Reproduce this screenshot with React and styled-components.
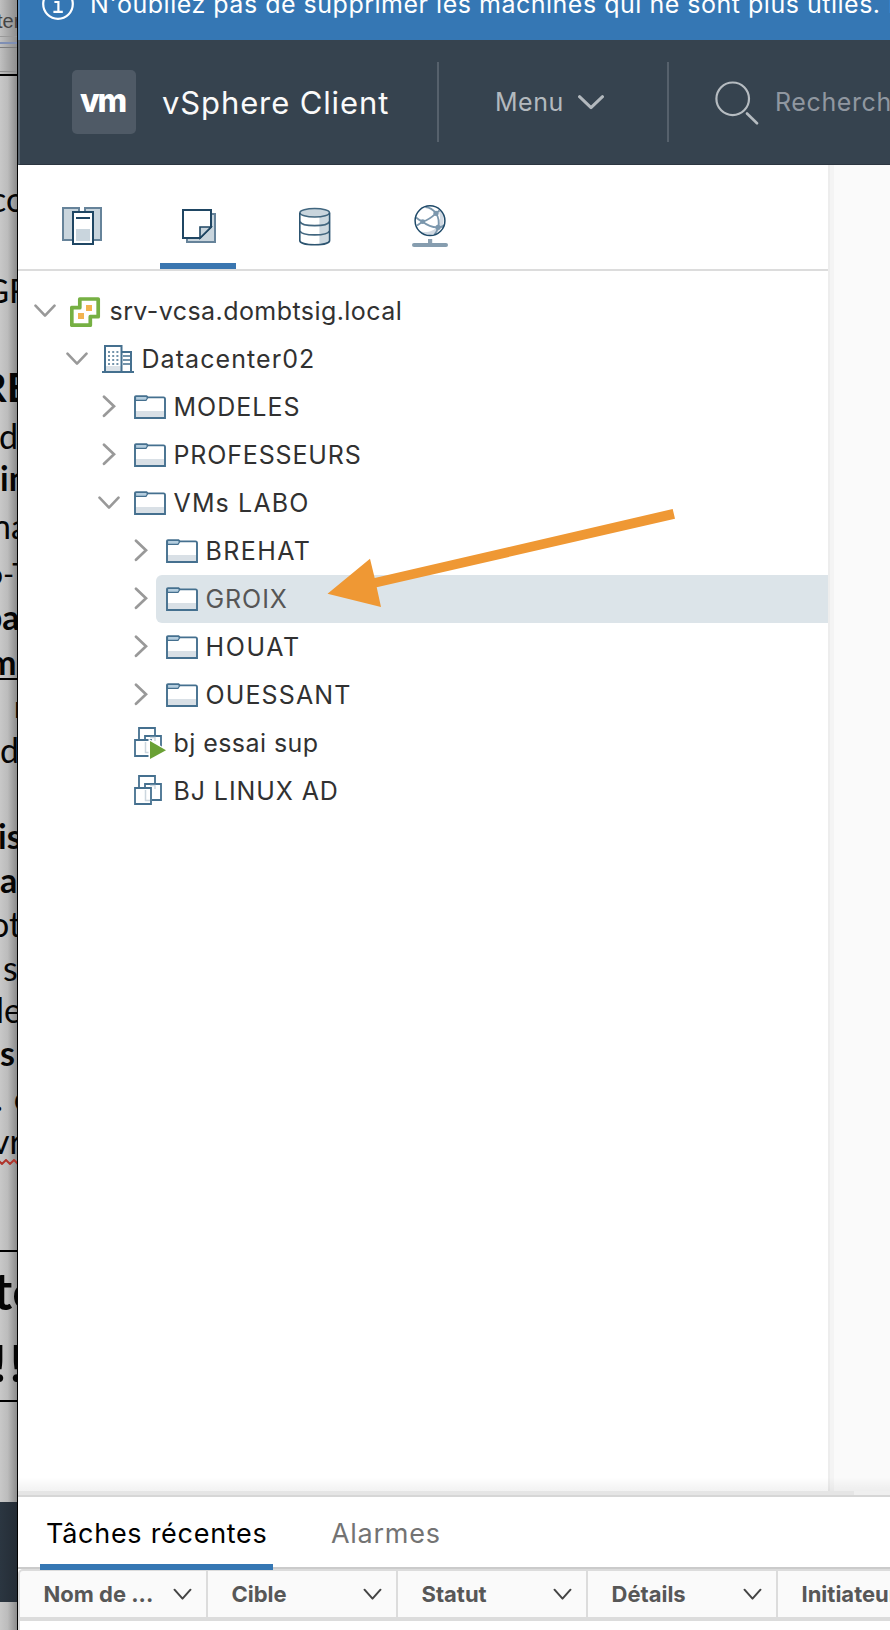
import React from 'react';
import styled, { createGlobalStyle, css } from 'styled-components';

const GlobalStyle = createGlobalStyle`
  *, *::before, *::after { box-sizing: border-box; }
  body {
    margin: 0;
    overflow: hidden;
    background: #fff;
    font-family: Inter, 'Liberation Sans', sans-serif;
  }
`;

const Desktop = styled.div`
  position: relative;
  display: flex;
  width: 890px;
  height: 1630px;
  overflow: hidden;
`;

/* ---------- document behind the window ---------- */

const DocStrip = styled.aside`
  flex: none;
  width: 18px;
  height: 1630px;
  overflow: hidden;
  border-right: 1px solid #000;
  background: linear-gradient(90deg, #c8c8c8 0%, #bcbcbc 45%, #8c8c8c 100%);
  color: #050505;
  font-family: Lato, 'Open Sans', sans-serif;
`;

const DocLine = styled.div`
  display: flex;
  align-items: flex-end;
  height: ${(p) => p.$height}px;
  padding-left: ${(p) => Math.max(p.$x, 0)}px;
  text-indent: ${(p) => Math.min(p.$x, 0)}px;
  font-size: ${(p) => p.$size}px;
  font-weight: ${(p) => (p.$bold ? 700 : 400)};
  letter-spacing: ${(p) => p.$tracking || 0}px;
  line-height: 1;
  white-space: pre;
`;

const DocToolbar = styled.div`
  height: 76px;
  background: linear-gradient(90deg, #c0c0c0, #8e8e8e);
  border-bottom: 2px solid #000;
`;

const DocTab = styled.div`
  height: 37px;
  padding-top: 11px;
  border-bottom: 1px solid #999;
  color: #444;
  font: 20px/20px 'Liberation Sans', sans-serif;
  text-indent: -3px;
  white-space: nowrap;
`;

const DocRuler = styled.div`
  height: 11px;
  padding-top: 5px;
  border-bottom: 1px solid #7d7d7d;

  &::before {
    content: '';
    display: block;
    height: 2px;
    background: #7f8fb4;
  }
`;

const DocToolbarEdge = styled.div`
  height: 24px;
  border-bottom: 1px solid #8d8d8d;
`;

const DocRule = styled.div`
  height: 2px;
  margin-top: ${(p) => p.$gap}px;
  background: #000;
`;

const DocFooter = styled.div`
  height: 100px;
  margin-top: ${(p) => p.$gap}px;
  background: linear-gradient(90deg, #2b3641, #242c35);
`;

const Squiggle = styled.svg`
  display: block;
  margin-top: 1px;
`;

/* ---------- window ---------- */

const Window = styled.main`
  display: flex;
  flex: 1;
  flex-direction: column;
  min-width: 0;
  background: #fff;
`;

const Banner = styled.div`
  display: flex;
  flex: none;
  align-items: center;
  height: 40px;
  padding: 0 0 32px 22px;
  border-left: 2px solid #5c8fc0;
  background: #3577b4;
  color: #fff;
  font-size: 25px;
  line-height: 8px;
  letter-spacing: 0.51px;
  white-space: nowrap;

  svg { flex: none; margin-right: 16px; }
`;

const TopBar = styled.header`
  display: flex;
  flex: none;
  align-items: center;
  height: 125px;
  border-left: 2px solid #5d6872;
  border-bottom: 1px solid #2c3641;
  background: #36434f;
  white-space: nowrap;
`;

const Brand = styled.div`
  display: flex;
  flex: none;
  align-items: center;
  width: 417px;
  padding-left: 52px;
  color: #fafafa;
  font-size: 31px;
  line-height: 36px;
  letter-spacing: 0.88px;
`;

const BrandName = styled.span`
  padding-top: 1px;
`;

const Logo = styled.span`
  display: flex;
  align-items: center;
  justify-content: center;
  width: 64px;
  height: 64px;
  margin-right: 26px;
  padding: 0 3px 3px 0;
  border-radius: 5px;
  background: #4f5a66;
  color: #fff;
  font-size: 32px;
  font-weight: 800;
  letter-spacing: -2.2px;
`;

const barSection = css`
  display: flex;
  flex: none;
  align-items: center;
  height: 80px;
  border-left: 2px solid #56616c;
  font-size: 25px;
`;

const MenuButton = styled.div`
  ${barSection}
  width: 230px;
  padding-left: 56px;
  color: #b3b9be;
  letter-spacing: 0.5px;

  svg { margin-left: 14px; }
`;

const Search = styled.div`
  ${barSection}
  padding-left: 45px;
  color: #9097a0;
  letter-spacing: 0.6px;

  svg { margin-right: 16px; color: #b6bcc1; }
`;

const Workspace = styled.div`
  position: relative;
  display: flex;
  flex: none;
  height: 1326px;

  &::after {
    content: '';
    position: absolute;
    inset: auto 0 0;
    height: 14px;
    background: linear-gradient(rgba(0, 0, 0, 0), rgba(0, 0, 0, 0.05));
  }
`;

const Navigator = styled.nav`
  width: 810px;
`;

const Content = styled.section`
  flex: 1;
  background: linear-gradient(90deg, #ededed 2px, #f4f4f4 2px, #f4f4f4 6px, #fafafa 6px);
`;

const NavTabs = styled.div`
  display: flex;
  gap: 40px;
  height: 106px;
  padding-left: 26px;
  border-bottom: 2px solid #dcdcdc;
`;

const NavTab = styled.div`
  display: flex;
  justify-content: center;
  width: 76px;
  height: 104px;
  padding-top: 39px;
  border-bottom: 6px solid ${(p) => (p.$active ? '#3a76b0' : 'transparent')};
`;

const Tree = styled.div`
  padding-top: 16px;
`;

const TreeRow = styled.div`
  display: flex;
  align-items: center;
  height: 48px;
  padding-left: ${(p) => 15 + p.$level * 32}px;
`;

const Toggle = styled.span`
  display: flex;
  flex: none;
  justify-content: center;
  width: 24px;
  margin-right: 3px;
  color: #999;
`;

const TreeItem = styled.div`
  display: flex;
  flex: 1;
  align-items: center;
  gap: 7.5px;
  height: 48px;
  padding-left: 10px;
  border-radius: 6px 0 0 6px;
  background: ${(p) => (p.$selected ? '#dce4e9' : 'transparent')};
  color: ${(p) => (p.$selected ? '#565656' : '#313131')};
  font-size: 25px;
  letter-spacing: ${(p) => p.$tracking}px;
  white-space: nowrap;
`;

const Splitter = styled.div`
  flex: none;
  height: 6px;
  border-bottom: 2px solid #d6d6d6;
  background: linear-gradient(90deg, #e5e5e5 836px, #efefef 836px);
`;

const BottomTabs = styled.div`
  display: flex;
  flex: none;
  gap: 36px;
  height: 72px;
  padding-left: 22px;
  border-bottom: 2px solid #cbcbcb;
`;

const BottomTab = styled.div`
  position: relative;
  width: ${(p) => p.$width}px;
  padding: ${(p) => (p.$active ? '0 6px' : '0 0 0 22px')};
  color: ${(p) => (p.$active ? '#000' : '#737373')};
  font-size: 27px;
  line-height: 74px;
  letter-spacing: 0.72px;
  white-space: nowrap;

  &::after {
    content: '';
    position: absolute;
    inset: 67px 0 auto;
    height: 6px;
    background: ${(p) => (p.$active ? '#3577b4' : 'transparent')};
  }
`;

const GridHead = styled.div`
  display: flex;
  flex: none;
  height: 52px;
  border: solid #dcdcdc;
  border-width: 2px 0 4px 2px;
  border-radius: 5px 0 0 0;
  background: #fafafa;
`;

const GridColumn = styled.div`
  display: flex;
  flex: none;
  align-items: center;
  justify-content: space-between;
  width: ${(p) => p.$width || 190}px;
  padding: 0 14px 0 23.5px;
  border-right: 2px solid #dcdcdc;
  color: #575757;
  font-size: 22px;
  font-weight: 700;
  white-space: nowrap;

  svg { color: #444; }
`;

const GridBody = styled.div`
  flex: 1;
  border-left: 2px solid #dedede;
`;

const Annotation = styled.svg`
  position: absolute;
  left: 320px;
  top: 500px;
`;

/* ---------- icons ---------- */

const DARK = '#1f4663';
const MID = '#66839a';
const PALE = '#c9d5dd';
const BLUE = '#45708f';

const Chevron = ({ w = 22, h = 14, stroke = 2.6 }) => (
  <svg width={w} height={h} fill="none" stroke="currentColor" strokeWidth={stroke} strokeLinecap="round" strokeLinejoin="round">
    <path d={`M1.5 1.7L${w / 2} ${h - 2.4}L${w - 1.5} 1.7`} />
  </svg>
);

const ChevronRight = () => (
  <svg width="15" height="24" fill="none" stroke="currentColor" strokeWidth="2.7" strokeLinecap="round">
    <path d="M2 1.8L12 11.3L2 20.8" />
  </svg>
);

const InfoIcon = () => (
  <svg width="32" height="32" viewBox="0 0 32 32" fill="none" stroke="#fff" strokeWidth="2.2">
    <circle cx="16" cy="16" r="14.8" />
    <path d="M12.4 14H16.4V23.6M11.4 23.9H20.8" />
    <circle cx="15.8" cy="8.8" r="1" fill="#fff" />
  </svg>
);

const SearchIcon = () => (
  <svg width="45" height="46" viewBox="0 0 45 46" fill="none" stroke="currentColor" strokeWidth="2.2" strokeLinecap="round">
    <circle cx="18.7" cy="19.8" r="16.3" />
    <path d="M33 34.5L43 44.3" strokeWidth="2.6" />
  </svg>
);

const HostsIcon = () => (
  <svg width="40" height="44">
    <path d="M1 4H17V36H1zM23 4H39V36H23z" fill={PALE} stroke={MID} strokeWidth="2" />
    <rect x="18" y="3" width="4" height="6" fill="#fff" />
    <rect x="11" y="8" width="20" height="32" fill="#fff" stroke={DARK} strokeWidth="2" />
    <rect x="14" y="13" width="14" height="2" fill={DARK} />
    <rect x="14" y="25" width="14" height="12" fill={PALE} />
  </svg>
);

const VmsTemplatesIcon = () => (
  <svg width="40" height="44">
    <rect x="9" y="10" width="28" height="28" fill={PALE} stroke={MID} strokeWidth="2" />
    <path d="M5 6H33V23L22 34H5z" fill="#fff" stroke={DARK} strokeWidth="2" />
    <path d="M33 23H22V34z" fill={PALE} stroke={DARK} strokeWidth="1.6" />
  </svg>
);

const StorageIcon = () => (
  <svg width="40" height="44" fill="none">
    <path d="M6 8.6V36.5C6 39 12 40.7 20.7 40.7S35.4 39 35.4 36.5V8.6" fill="#fff" />
    <path d="M25.4 12V40.5C31 40 35.4 38.5 35.4 36.5V8.6z" fill="#ccd8df" />
    <path d="M6 17.6C8 23 33.4 23 35.4 17.6M6 27C8 32.2 33.4 32.2 35.4 27" stroke="#41667f" strokeWidth="1.6" />
    <ellipse cx="20.7" cy="8.8" rx="14.8" ry="4.2" fill={PALE} stroke="#41667f" strokeWidth="1.5" />
    <path d="M5.8 8.8V36.5C5.8 39 12 40.8 20.7 40.8S35.6 39 35.6 36.5V8.8" stroke="#2c5470" strokeWidth="1.6" />
  </svg>
);

const NetworkIcon = () => (
  <svg width="40" height="44" fill="none">
    <circle cx="20" cy="16.7" r="14.8" fill="#fff" />
    <path d="M32 8C36 17 33 29 20 31C14 31.2 11 29.5 9 27.5C18 29 24 27 27.5 22.5C30 18 31 13 28.5 6z" fill="#d2dae3" />
    <g stroke="#7b97ad" strokeWidth="1.8">
      <path d="M6 13.5C9 16 11 17 12.7 17.7C18 16 22 13 26 9.3C23 5.5 20 3.5 15.5 3" />
      <path d="M7 21.5C9 20 11 18.8 12.7 17.7C18 22 23 23.5 28 23.3C31 23.3 33 22.5 34.5 21" />
      <path d="M26 9.3C29 14 29.5 18 28 23.3C27.5 26 26.5 28 24.5 30.5M26 9.3L29.5 6.5" />
    </g>
    <g fill="#7b97ad">
      <circle cx="12.7" cy="17.7" r="2.4" />
      <circle cx="26" cy="9.3" r="2.6" />
      <circle cx="28" cy="23.3" r="2.6" />
    </g>
    <circle cx="20" cy="16.7" r="14.9" stroke="#1f4a69" strokeWidth="1.5" />
    <path d="M18 35H22.2V39H18z" fill="#8ca1b2" />
    <rect x="2" y="38.9" width="36" height="4.1" rx="2" fill="#869daf" />
  </svg>
);

const VCenterIcon = () => (
  <svg width="32" height="32" fill="none">
    <path d="M9.8 4H28.2V21.7H20.3V30.2H1.8V12.7H9.8z" fill="#fff" stroke="#76b043" strokeWidth="3.7" strokeLinejoin="round" />
    <path d="M16 10h6v6h-6zM8 18h6v6h-6z" fill="#f2b350" />
  </svg>
);

const DatacenterIcon = () => (
  <svg width="32" height="32" fill="none">
    <path d="M3 3H19V29H3z" fill="#fff" />
    <path d="M3 23H19V29H3z" fill="#dbe2e8" />
    <path d="M3 29V3H19.5V29M19.5 9H29V29" stroke={BLUE} strokeWidth="2" />
    <path d="M0 29H32" stroke={BLUE} strokeWidth="2" />
    <path d="M6 9H17M6 13H17M6 17H17M6 21H17" stroke={BLUE} strokeWidth="1.6" strokeDasharray="2 2.2" />
    <path d="M21 13H28M21 17H28M21 21H28" stroke={BLUE} strokeWidth="1.4" />
  </svg>
);

const FolderIcon = () => (
  <svg width="32" height="32" fill="none">
    <path d="M1 6.5H30L31 8V27H1z" fill="#fff" />
    <rect x="2" y="20" width="28" height="6" fill="#d9e0e6" />
    <path d="M1 27V6Q1 5.2 2 5.2H12.5L14 6.4H29.5Q31 6.4 31 8V27z" stroke={BLUE} strokeWidth="1.9" />
    <path d="M1.5 5.5H12.5L13.5 7L12 9.3H1.5z" fill="#b5cedf" stroke={BLUE} strokeWidth="1.2" />
  </svg>
);

const VmIcon = ({ running }) => (
  <svg width="32" height="32" fill="none">
    <g fill="#fff" stroke={BLUE} strokeWidth="1.8">
      <path d="M5 13V1H21V9" />
      <path d="M11 13V9H27V25H18" />
      <path d="M1 13H17V29H1z" />
    </g>
    <path d="M11.5 15V25.5H16M16 10.5H21V14" stroke="#ccd6de" strokeWidth="1.5" />
    {running && <path d="M14.5 11.5L32 22V33H14.5z" fill="#fff" />}
    {running && <path d="M16 14L32 23.2L16 32z" fill="#6aa135" />}
  </svg>
);

/* ---------- data ---------- */

const DOC_BLOCKS = [
  [
    ['co', 212, 34, -10],
    ['GF', 303, 33, -15],
    ['RE', 402, 40, -19, true],
    ['d', 449, 34, -1],
    ['in', 491, 34, 0, true],
    ['na', 539, 34, -8],
    ['o-T', 585, 30, -14],
    ['pa', 630, 34, -17, true],
    ['m', 675, 34, -12, true],
  ],
  [
    ['n', 718, 30, 14],
    ['d', 763, 34, 0],
    ['is', 849, 34, -2, true],
    ['a', 893, 34, 0, true],
    ['ot', 937, 34, -10],
    ['s', 981, 34, 3],
    ['le', 1023, 34, -4],
    ['s', 1066, 34, 0, true],
    ['. c', 1111, 34, -5, false, 1],
    ['vr', 1154, 34, -8],
  ],
  [
    ['to', 1310, 52, -7, true],
    ['!!', 1382, 52, -8, true, 3],
  ],
];

const NODES = [
  { label: 'srv-vcsa.dombtsig.local', level: 0, open: true, icon: VCenterIcon, tracking: 0.43 },
  { label: 'Datacenter02', level: 1, open: true, icon: DatacenterIcon, tracking: 1.08 },
  { label: 'MODELES', level: 2, open: false, icon: FolderIcon, tracking: 1.0 },
  { label: 'PROFESSEURS', level: 2, open: false, icon: FolderIcon, tracking: 0.85 },
  { label: 'VMs LABO', level: 2, open: true, icon: FolderIcon, tracking: 1.14 },
  { label: 'BREHAT', level: 3, open: false, icon: FolderIcon, tracking: 1.4 },
  { label: 'GROIX', level: 3, open: false, icon: FolderIcon, tracking: 0.93 },
  { label: 'HOUAT', level: 3, open: false, icon: FolderIcon, tracking: 1.65 },
  { label: 'OUESSANT', level: 3, open: false, icon: FolderIcon, tracking: 1.12 },
  { label: 'bj essai sup', level: 2, icon: VmIcon, running: true, tracking: 0.44 },
  { label: 'BJ LINUX AD', level: 2, icon: VmIcon, tracking: 0.9 },
];

const SELECTED = 'GROIX';

const COLUMNS = [
  { label: 'Nom de ...', width: 188 },
  { label: 'Cible' },
  { label: 'Statut' },
  { label: 'Détails' },
  { label: 'Initiateur' },
];

/* Each line box ends a little below its baseline, in proportion to the font size. */
const lineBottom = (baseline, size) => baseline + Math.round(size * 0.113);

const DocLines = ({ lines, top }) => {
  let y = top;
  return lines.map(([text, baseline, size, x, bold, tracking]) => {
    const bottom = lineBottom(baseline, size);
    const height = bottom - y;
    y = bottom;
    return (
      <DocLine key={baseline} $height={height} $size={size} $x={x} $bold={bold} $tracking={tracking}>
        {text}
      </DocLine>
    );
  });
};

const DocumentBehind = () => (
  <DocStrip>
    <DocToolbar>
      <DocTab>ter</DocTab>
      <DocRuler />
      <DocToolbarEdge />
    </DocToolbar>
    <DocLines lines={DOC_BLOCKS[0]} top={76} />
    <DocRule $gap={-1} />
    <DocLines lines={DOC_BLOCKS[1]} top={680} />
    <Squiggle width="17" height="6" fill="none" stroke="#b0352c" strokeWidth="2">
      <path d="M-2 1L2 5L6 1L10 5L14 1L18 5" />
    </Squiggle>
    <DocRule $gap={85} />
    <DocLines lines={DOC_BLOCKS[2]} top={1252} />
    <DocRule $gap={12} />
    <DocFooter $gap={100} />
  </DocStrip>
);

export default function App() {
  return (
    <>
      <GlobalStyle />
      <Desktop>
        <DocumentBehind />
        <Window>
          <Banner>
            <InfoIcon />
            N'oubliez pas de supprimer les machines qui ne sont plus utiles. Il
          </Banner>
          <TopBar>
            <Brand>
              <Logo>vm</Logo>
              <BrandName>vSphere Client</BrandName>
            </Brand>
            <MenuButton>
              Menu
              <Chevron w={26} h={15} stroke={3} />
            </MenuButton>
            <Search>
              <SearchIcon />
              Rechercher
            </Search>
          </TopBar>
          <Workspace>
            <Navigator>
              <NavTabs>
                <NavTab><HostsIcon /></NavTab>
                <NavTab $active><VmsTemplatesIcon /></NavTab>
                <NavTab><StorageIcon /></NavTab>
                <NavTab><NetworkIcon /></NavTab>
              </NavTabs>
              <Tree>
                {NODES.map(({ label, level, open, icon: Icon, tracking, running }) => (
                  <TreeRow key={label} $level={level}>
                    <Toggle>
                      {open === true && <Chevron />}
                      {open === false && <ChevronRight />}
                    </Toggle>
                    <TreeItem $selected={label === SELECTED} $tracking={tracking}>
                      <Icon running={running} />
                      {label}
                    </TreeItem>
                  </TreeRow>
                ))}
              </Tree>
            </Navigator>
            <Content />
          </Workspace>
          <Splitter />
          <BottomTabs>
            <BottomTab $active $width={233}>Tâches récentes</BottomTab>
            <BottomTab $width={150}>Alarmes</BottomTab>
          </BottomTabs>
          <GridHead>
            {COLUMNS.map(({ label, width }) => (
              <GridColumn key={label} $width={width}>
                {label}
                <Chevron w={19} h={13} stroke={2} />
              </GridColumn>
            ))}
          </GridHead>
          <GridBody />
        </Window>
        <Annotation width="365" height="120">
          <path d="M7.5 93.7L50 58.7L54.7 78L352.7 9L355 18.7L56.7 87.3L61 107z" fill="#ef9834" />
        </Annotation>
      </Desktop>
    </>
  );
}
